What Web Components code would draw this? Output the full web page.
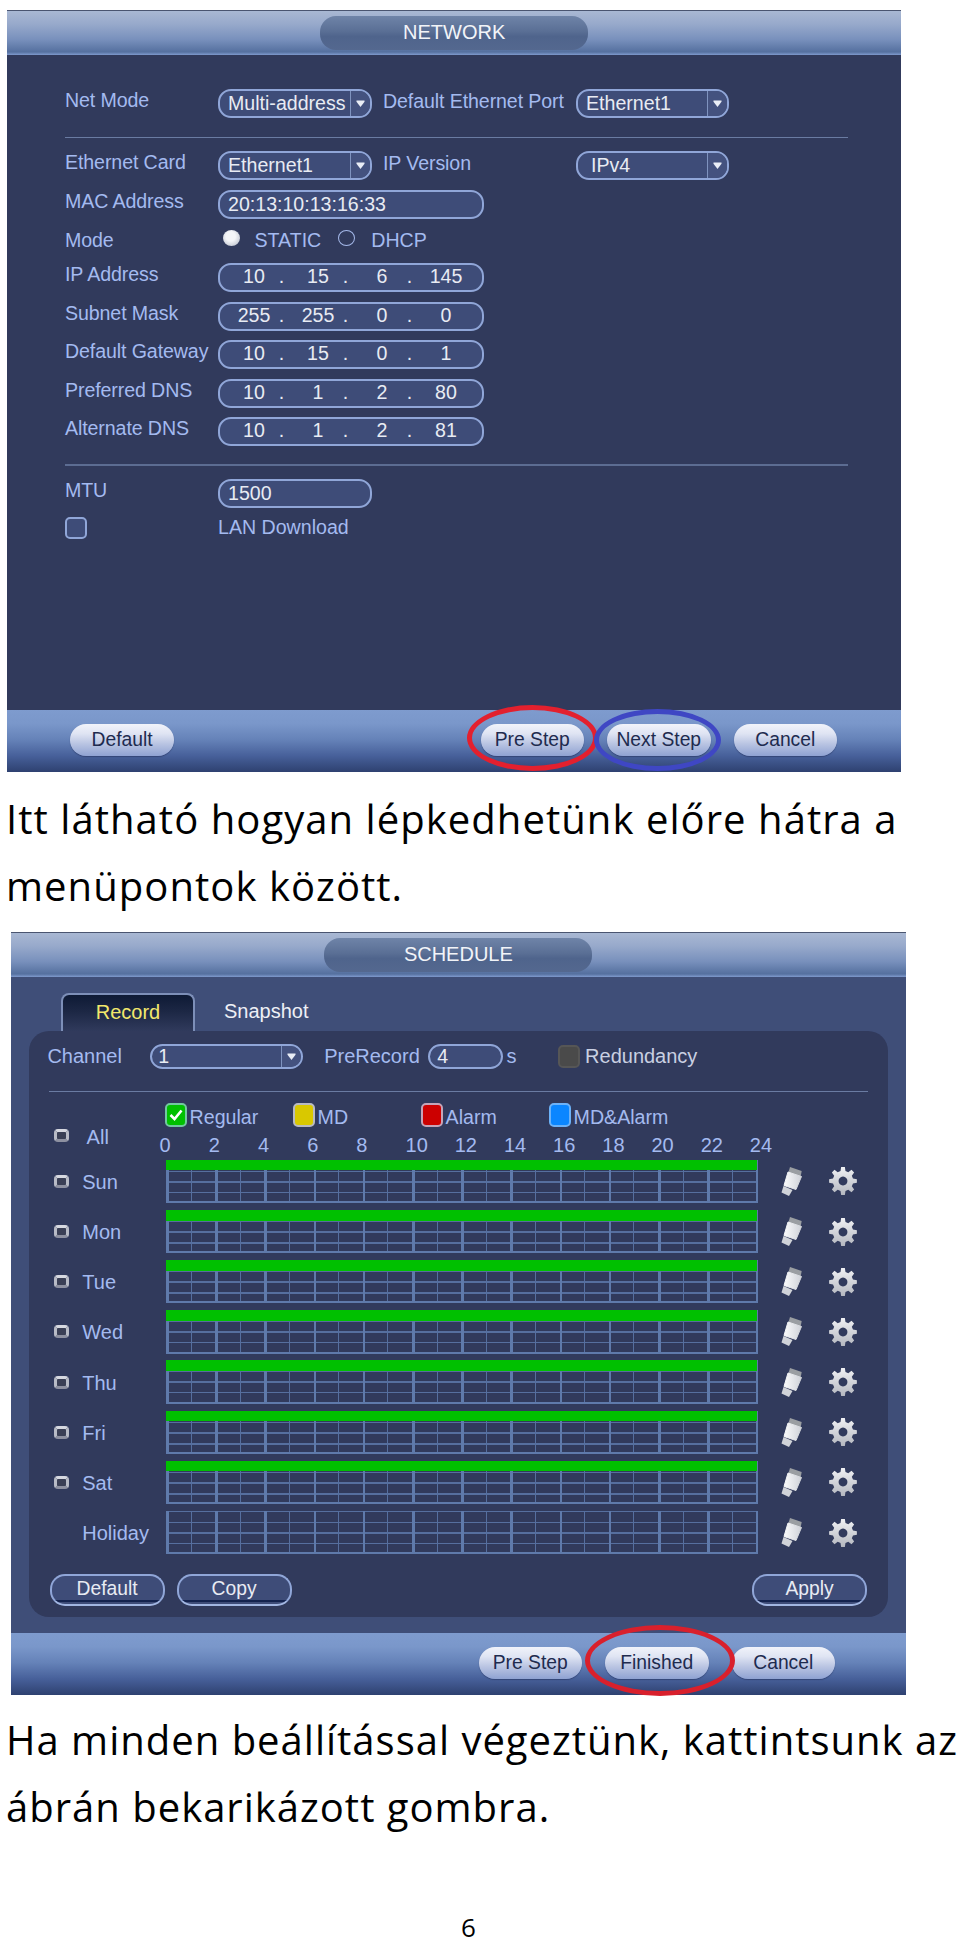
<!DOCTYPE html>
<html lang="hu">
<head>
<meta charset="utf-8">
<title>NETWORK / SCHEDULE</title>
<style>
    html, body { margin: 0; padding: 0; background: #fff; }
    body { font-family: "Liberation Sans", Arial, sans-serif; font-size: 19.6px; }
</style>
</head>
<body>

<doc-page>
    <dvr-window title="NETWORK" style="margin-left:7px;width:894.4px;height:762px;margin-top:10px">
        <net-form></net-form>
        <dvr-pill slot="footer" style="margin-right:auto">Default</dvr-pill>
        <dvr-pill slot="footer">Pre Step</dvr-pill>
        <dvr-pill slot="footer">Next Step</dvr-pill>
        <dvr-pill slot="footer">Cancel</dvr-pill>
        <dvr-ring slot="footer" color="#e3202e" style="left:459.5px;top:-5px;width:131px;height:66px"></dvr-ring>
        <dvr-ring slot="footer" color="#3f47c4" style="left:587px;top:-1px;width:127px;height:62px"></dvr-ring>
    </dvr-window>

    <doc-text style="margin-top:12.5px;margin-bottom:12.5px;--ls:1.05px">Itt látható hogyan lépkedhetünk előre hátra a<br>menüpontok között.</doc-text>

    <dvr-window title="SCHEDULE" tall style="margin-left:11px;width:894.7px;height:762.5px">
        <sched-form></sched-form>
        <dvr-pill slot="footer">Pre Step</dvr-pill>
        <dvr-pill slot="footer">Finished</dvr-pill>
        <dvr-pill slot="footer">Cancel</dvr-pill>
        <dvr-ring slot="footer" color="#d9202c" style="left:574px;top:-8px;width:150px;height:71px"></dvr-ring>
    </dvr-window>

    <doc-text style="margin-top:11px;--ls:1px">Ha minden beállítással végeztünk, kattintsunk az<br>ábrán bekarikázott gombra.</doc-text>

    <doc-number>6</doc-number>
</doc-page>

<script>
    function tpl(html) {
        const t = document.createElement('template');
        t.innerHTML = html;
        return t;
    }

    class Base extends HTMLElement {
        constructor() {
            super();
            this.attachShadow({ mode: 'open' });
            this.shadowRoot.appendChild(this.constructor.template.content.cloneNode(true));
        }
    }

    class DocPage extends Base {
        static template = tpl(`<style>:host{display:block;width:960px;height:1941px;overflow:hidden;padding-top:.1px;box-sizing:border-box}</style><slot></slot>`);
    }

    class DocText extends Base {
        static template = tpl(`<style>
            :host{display:block;padding-left:6px;font-family:"Open Sans","Liberation Sans",sans-serif;font-size:40px;line-height:67.5px;color:#000;letter-spacing:var(--ls,0);white-space:nowrap}
        </style><slot></slot>`);
    }

    class DocNumber extends Base {
        static template = tpl(`<style>
            :host{display:block;width:937px;margin-top:71px;text-align:center;font-family:"Open Sans","Liberation Sans",sans-serif;font-size:26px;line-height:30px;color:#000}
        </style><slot></slot>`);
    }

    class DvrWindow extends Base {
        static template = tpl(`<style>
            :host{display:flex;flex-direction:column;box-sizing:border-box}
            header{flex:none;height:45px;box-sizing:border-box;display:flex;align-items:center;justify-content:center;padding-bottom:1px;
                border-top:1px solid #4a5570;
                background:linear-gradient(#a9b8d3 0,#97a9cb 30%,#7890bc 65%,#55709f 93%,#7f9ace 100%)}
            .title{width:268px;height:34px;border-radius:16px;display:flex;align-items:center;justify-content:center;color:#f2f4f8;font-size:20px;
                background:linear-gradient(#6f84a8,#5a6f95 45%,#4f648c 60%,#54688f)}
            main{flex:1;min-height:0;background:var(--body,#313a5c);display:flex;flex-direction:column}
            footer{flex:none;height:62px;position:relative;box-sizing:border-box;display:flex;align-items:center;justify-content:flex-end;gap:23px;padding:0 64.4px 2px 63.4px;
                background:linear-gradient(#7e9bce 0,#7a97ca 22%,#6582b8 48%,#47609a 74%,#2e4170 100%)}
        </style>
        <header><div class="title"></div></header>
        <main><slot></slot></main>
        <footer><slot name="footer"></slot></footer>`);

        connectedCallback() {
            this.shadowRoot.querySelector('.title').textContent = this.getAttribute('title');
            this.removeAttribute('title');
            if (this.hasAttribute('tall')) {
                this.shadowRoot.querySelector('main').style.setProperty('--body', '#3f4e78');
                this.shadowRoot.querySelector('footer').style.paddingRight = '70.7px';
            }
        }
    }

    class DvrPill extends Base {
        static template = tpl(`<style>
            :host{display:flex;align-items:center;justify-content:center;flex:none;width:103.5px;height:32px;border-radius:16px;color:#1e2b4f;font-size:19.3px;
                background:linear-gradient(#f1f3fa 0,#dfe4f3 30%,#b9c4e2 62%,#8fa2d2 100%);box-shadow:0 1px 1px rgba(30,40,80,.45)}
        </style><slot></slot>`);
    }

    class DvrRing extends Base {
        static template = tpl(`<style>
            :host{position:absolute;box-sizing:border-box;border:5px solid var(--c);border-radius:50%;pointer-events:none}
        </style>`);
        connectedCallback() { this.style.setProperty('--c', this.getAttribute('color')); }
    }

    const fieldCss = `:host{display:flex;align-items:center;box-sizing:border-box;height:var(--h,29px);width:var(--w,154px);flex:none;
            border:2px solid #90a6d8;border-radius:13px;background:#3e4c78;color:#e8ebf3;font-size:19.6px;overflow:hidden}`;

    class DvrField extends Base {
        static template = tpl(`<style>${fieldCss}
            :host{padding-left:8px}
        </style><slot></slot>`);
    }

    class DvrSelect extends Base {
        static template = tpl(`<style>${fieldCss}
            .val{flex:1;padding-left:var(--pl,8px);white-space:nowrap}
            .drop{flex:none;width:19px;align-self:stretch;border-left:1px solid #7f93bf;display:flex;align-items:center;justify-content:center;background:#44527f}
        </style>
        <div class="val"><slot></slot></div>
        <div class="drop"><svg width="9" height="9" viewBox="0 0 9 9"><path d="M.5 1.5h8v1.2L4.5 8 .5 2.7z" fill="#e9edf6"/></svg></div>`);
    }

    class DvrIp extends Base {
        static template = tpl(`<style>${fieldCss}
            :host{--w:266px;padding:0 0 2px 16px}
            span{flex:none;width:36px;text-align:center}
            i{flex:none;width:19px;margin-right:9px;text-align:center;font-style:normal}
        </style><span></span><i>.</i><span></span><i>.</i><span></span><i>.</i><span></span>`);
        connectedCallback() {
            const parts = this.getAttribute('value').split('.');
            this.shadowRoot.querySelectorAll('span').forEach((s, i) => s.textContent = parts[i]);
        }
    }

    class DvrRadio extends Base {
        static template = tpl(`<style>
            :host{display:block;box-sizing:border-box;flex:none;width:17px;height:16px;border-radius:50%;border:1.5px solid #a5b9ea}
            :host([on]){border:0;background:radial-gradient(circle at 45% 40%,#f4f5f8 0 35%,#c8ccd6 75%,#9aa0b2)}
        </style>`);
    }

    class DvrCheck extends Base {
        static template = tpl(`<style>
            :host{display:flex;align-items:center;justify-content:center;box-sizing:border-box;flex:none;width:22px;height:var(--bh,24px);border-radius:5px;
                border:2px solid var(--bd,#90a6d8);background:var(--fill,#3e4c78)}
        </style><slot></slot>`);
    }

    // little silver rounded square in front of the day names
    class DvrTick extends Base {
        static template = tpl(`<style>
            :host{display:block;box-sizing:border-box;flex:none;width:15px;height:13px;border-radius:4px;border:3px solid;border-color:#d6d8e0 #b8bbc6 #8d90a0;background:#3a3f55}
        </style>`);
    }

    class DvrGhost extends Base {
        static template = tpl(`<style>
            :host{display:flex;align-items:center;justify-content:center;box-sizing:border-box;flex:none;width:115px;height:32.7px;border-radius:15px;
                border:2px solid #90a6d8;border-bottom-color:#a2b6e2;background:linear-gradient(#3e4c78 85%,#14234f 85% 93%,#3e4c78 93%);color:#e8ebf3;font-size:19.3px;padding-bottom:2px}
        </style><slot></slot>`);
    }

    // one day of the schedule: tick, name, hour grid, eraser and gear
    function gearPath() {
        const cx = 14, cy = 14, n = 8;
        let d = '';
        for (let i = 0; i < n; i++) {
            const a = i / n * Math.PI * 2 - Math.PI / 2;
            const st = Math.PI / n;
            const pts = [[10.3, a - st * .62], [14, a - st * .34], [14, a + st * .34], [10.3, a + st * .62]];
            pts.forEach((p, j) => {
                const x = (cx + p[0] * Math.cos(p[1])).toFixed(2);
                const y = (cy + p[0] * Math.sin(p[1])).toFixed(2);
                d += (i === 0 && j === 0 ? 'M' : 'L') + x + ' ' + y;
            });
        }
        return d + 'Z M14 9.6a4.4 4.4 0 1 0 .01 0Z';
    }

    class DvrDay extends Base {
        static template = tpl(`<style>
            :host{display:flex;align-items:center;height:43.4px;margin-bottom:6.77px;color:#a4baf0;font-size:20px}
            .name{flex:none;width:136.6px;box-sizing:border-box;padding-left:24.6px;display:flex;align-items:center}
            .label{margin-left:13.7px;white-space:nowrap;padding-top:2px}
            .grid{flex:none;width:592px;height:43.4px;box-sizing:border-box;border-right:2px solid #5f7aab;border-bottom:2px solid #5f7aab;
                background-image:
                    repeating-linear-gradient(90deg,#5f7aab 0 2.6px,transparent 2.6px 49.2px),
                    repeating-linear-gradient(90deg,transparent 0 24.6px,#566f9f 24.6px 25.6px,transparent 25.6px 49.2px),
                    repeating-linear-gradient(180deg,#566f9f 0 1.4px,transparent 1.4px 10.7px)}
            .green{height:10.7px;background:#00c000;margin-right:-1px}
            .eraser{flex:none;margin-left:23px}
            .gear{flex:none;margin-left:27px}
        </style>
        <div class="name"><dvr-tick></dvr-tick><span class="label"></span></div>
        <div class="grid"></div>
        <svg class="eraser" width="21" height="29" viewBox="0 0 21 29">
            <defs><linearGradient id="e" x1="0" y1="0" x2="1" y2="0"><stop offset="0" stop-color="#fafbfc"/><stop offset="1" stop-color="#cfd2d8"/></linearGradient></defs>
            <polygon points="9,0 20.7,4 19.5,10 7.3,5.7" fill="#9a9ea2"/>
            <polygon points="7,5 20.5,9.5 15,22.5 3,18.5" fill="url(#e)" stroke="url(#e)" stroke-linejoin="round"/>
            <polygon points="2.5,19 11.5,23 8,29 .5,25.5" fill="#d0d3d9"/>
        </svg>
        <svg class="gear" width="28" height="28" viewBox="0 0 28 28">
            <defs><linearGradient id="g" x1="0" y1="0" x2="0" y2="1"><stop offset="0" stop-color="#f0f1f4"/><stop offset="1" stop-color="#b4b7bf"/></linearGradient></defs>
            <path fill="url(#g)" fill-rule="evenodd" d="${gearPath()}"/>
        </svg>`);
        connectedCallback() {
            const root = this.shadowRoot;
            root.querySelector('.label').textContent = this.getAttribute('name');
            if (this.hasAttribute('notick')) root.querySelector('dvr-tick').style.visibility = 'hidden';
            if (this.hasAttribute('green')) {
                const g = document.createElement('div');
                g.className = 'green';
                root.querySelector('.grid').appendChild(g);
            }
        }
    }

    class NetForm extends Base {
        static template = tpl(`<style>
            :host{display:block;padding:34px 0 0 58px;color:#a4baf0;font-size:19.6px}
            .row{display:flex;align-items:center;height:29px;margin-bottom:9.5px}
            .lab{flex:none;width:153px;padding-bottom:6px;white-space:nowrap;letter-spacing:-.1px}
            .lab2{flex:none;width:193px;margin-left:11px;padding-bottom:5px;white-space:nowrap;letter-spacing:-.1px}
            hr{border:0;height:1px;background:#6a7ba2;width:783px;margin:0}
            .mode{height:25px}
            .mode .lab{padding-bottom:0}
        </style>
        <div class="row"><div class="lab">Net Mode</div><dvr-select>Multi-address</dvr-select><div class="lab2">Default Ethernet Port</div><dvr-select style="--w:153px">Ethernet1</dvr-select></div>
        <hr style="margin-top:19px;margin-bottom:13px">
        <div class="row"><div class="lab">Ethernet Card</div><dvr-select>Ethernet1</dvr-select><div class="lab2">IP Version</div><dvr-select style="--w:153px;--pl:13px">IPv4</dvr-select></div>
        <div class="row"><div class="lab">MAC Address</div><dvr-field style="--w:266px">20:13:10:13:16:33</dvr-field></div>
        <div class="row mode" style="margin-bottom:10px">
            <div class="lab">Mode</div>
            <dvr-radio on style="margin-left:4.5px;margin-bottom:5px"></dvr-radio><span style="margin-left:15px">STATIC</span>
            <dvr-radio style="margin-left:17px;margin-bottom:5px"></dvr-radio><span style="margin-left:16px">DHCP</span>
        </div>
        <div class="row"><div class="lab">IP Address</div><dvr-ip value="10.15.6.145"></dvr-ip></div>
        <div class="row"><div class="lab">Subnet Mask</div><dvr-ip value="255.255.0.0"></dvr-ip></div>
        <div class="row"><div class="lab">Default Gateway</div><dvr-ip value="10.15.0.1"></dvr-ip></div>
        <div class="row"><div class="lab">Preferred DNS</div><dvr-ip value="10.1.2.80"></dvr-ip></div>
        <div class="row"><div class="lab">Alternate DNS</div><dvr-ip value="10.1.2.81"></dvr-ip></div>
        <hr style="margin-top:17.5px;margin-bottom:13px;background:#5c6c92;height:2px">
        <div class="row" style="margin-bottom:9.5px"><div class="lab">MTU</div><dvr-field>1500</dvr-field></div>
        <div class="row" style="height:22px"><div class="lab"><dvr-check style="--bh:22px;margin-top:6px"></dvr-check></div><span style="padding-bottom:2px">LAN Download</span></div>`);
    }

    class SchedForm extends Base {
        static template = tpl(`<style>
            :host{display:block;color:#a4baf0;font-size:20px}
            .tabs{display:flex;height:37.7px;margin-top:16px;padding-left:50px;box-sizing:content-box}
            .tab{box-sizing:border-box;width:134px;border:2px solid #7d8fb8;border-bottom:0;border-radius:8px 8px 0 0;display:flex;align-items:center;justify-content:center;color:#f2e86c;padding-bottom:1px;
                background:linear-gradient(#0e1a35 0,#1c2744 45%,#303a5c 100%)}
            .tab2{margin-left:29px;color:#eef0f6;display:flex;align-items:center;padding-bottom:1px}
            .inner{margin:0 18px;box-sizing:border-box;height:586.3px;background:#313a5c;border-radius:20px;padding-top:13.3px}
            .controls{display:flex;align-items:center;height:25px;padding-left:18.4px;--h:25px}
            hr{border:0;height:1px;background:#6a7ba2;width:819px;margin:22px 0 11px 19.6px}
            .top{display:flex;height:54px;margin-bottom:2.7px}
            .all{flex:none;width:130.6px;box-sizing:border-box;padding:0 0 8px 24.6px;display:flex;align-items:flex-end}
            .all span{margin-left:18px;line-height:24px}
            .all dvr-tick{margin-bottom:7px}
            .legend{display:flex;height:24px;margin-left:5px}
            .item{flex:none;width:128px;display:flex;align-items:center;gap:3px;font-size:19.6px}
            .item span{padding-top:5px}
            .hours{display:flex;height:23px;margin-top:7px;align-items:center}
            .hours span{flex:none;width:49.2px;font-size:20px}
            .buttons{display:flex;margin-top:19.5px;padding:0 20.6px}
            .buttons dvr-ghost + dvr-ghost{margin-left:12px}
            .buttons dvr-ghost:last-child{margin-left:auto}
        </style>
        <div class="tabs"><div class="tab">Record</div><div class="tab2">Snapshot</div></div>
        <div class="inner">
            <div class="controls">
                <span style="flex:none;width:102.8px">Channel</span><dvr-select style="--w:152.4px;--pl:6px">1</dvr-select>
                <span style="flex:none;width:104.1px;margin-left:21.6px">PreRecord</span><dvr-field style="--w:74.3px;padding-left:7px">4</dvr-field>
                <span style="flex:none;width:51.5px;margin-left:4px">s</span>
                <dvr-check style="--fill:#4a4a4a;--bd:#565656;--bh:23px"></dvr-check><span style="margin-left:5px;color:#c9d0e2">Redundancy</span>
            </div>
            <hr>
            <div class="top">
                <div class="all"><dvr-tick></dvr-tick><span>All</span></div>
                <div>
                    <div class="legend">
                        <div class="item"><dvr-check style="--fill:#00c000;--bd:#72c8a0"><svg width="14" height="12" viewBox="0 0 14 12"><path d="M1.5 6l4 4 7-8.5" fill="none" stroke="#fff" stroke-width="2.6"/></svg></dvr-check><span>Regular</span></div>
                        <div class="item"><dvr-check style="--fill:#d9c800;--bd:#b8bac2"></dvr-check><span>MD</span></div>
                        <div class="item"><dvr-check style="--fill:#cc0000;--bd:#c5a4b8"></dvr-check><span>Alarm</span></div>
                        <div class="item"><dvr-check style="--fill:#0a86ff;--bd:#6cb2f8"></dvr-check><span>MD&amp;Alarm</span></div>
                    </div>
                    <div class="hours"><span>0</span><span>2</span><span>4</span><span>6</span><span>8</span><span>10</span><span>12</span><span>14</span><span>16</span><span>18</span><span>20</span><span>22</span><span>24</span></div>
                </div>
            </div>
            <dvr-day name="Sun" green></dvr-day>
            <dvr-day name="Mon" green></dvr-day>
            <dvr-day name="Tue" green></dvr-day>
            <dvr-day name="Wed" green></dvr-day>
            <dvr-day name="Thu" green></dvr-day>
            <dvr-day name="Fri" green></dvr-day>
            <dvr-day name="Sat" green></dvr-day>
            <dvr-day name="Holiday" notick></dvr-day>
            <div class="buttons"><dvr-ghost>Default</dvr-ghost><dvr-ghost>Copy</dvr-ghost><dvr-ghost>Apply</dvr-ghost></div>
        </div>`);
    }

    customElements.define('doc-page', DocPage);
    customElements.define('doc-text', DocText);
    customElements.define('doc-number', DocNumber);
    customElements.define('dvr-window', DvrWindow);
    customElements.define('dvr-pill', DvrPill);
    customElements.define('dvr-ring', DvrRing);
    customElements.define('dvr-field', DvrField);
    customElements.define('dvr-select', DvrSelect);
    customElements.define('dvr-ip', DvrIp);
    customElements.define('dvr-radio', DvrRadio);
    customElements.define('dvr-check', DvrCheck);
    customElements.define('dvr-tick', DvrTick);
    customElements.define('dvr-ghost', DvrGhost);
    customElements.define('dvr-day', DvrDay);
    customElements.define('net-form', NetForm);
    customElements.define('sched-form', SchedForm);
</script>
</body>
</html>
